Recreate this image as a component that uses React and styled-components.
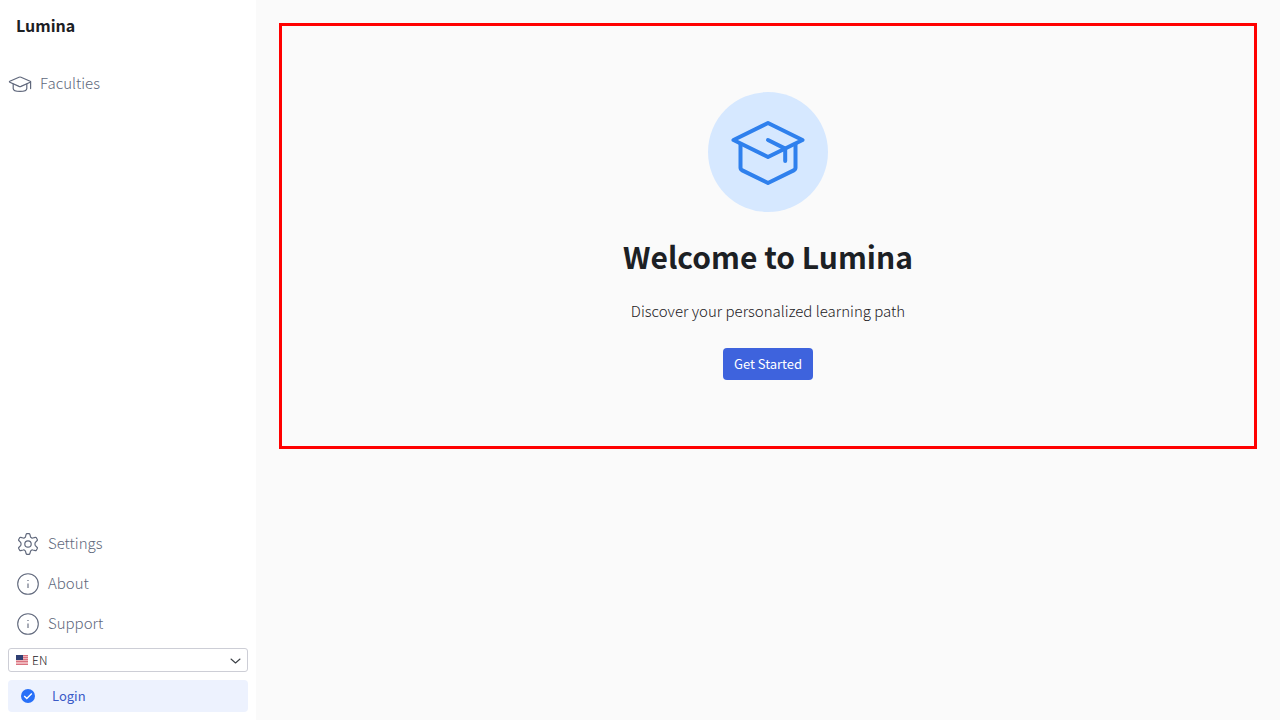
import React from 'react';
import styled, { createGlobalStyle } from 'styled-components';

const GlobalStyle = createGlobalStyle`
  *, *::before, *::after { box-sizing: border-box; }
  body {
    margin: 0;
    background: #fafafa;
    color: #1c2024;
    font-family: "Noto Sans CJK SC", "Noto Sans CJK JP", sans-serif;
    font-size: 15px;
    line-height: 22px;
  }
`;

const Layout = styled.div`
  display: flex;
  min-height: 100vh;
`;

const Sidebar = styled.aside`
  display: flex;
  flex-direction: column;
  flex: 0 0 256px;
  padding: 8px;
  background: #fff;
`;

const Brand = styled.div`
  padding: 4px 8px;
  font-size: 16px;
  line-height: 26px;
  font-weight: 700;
`;

const Nav = styled.nav`
  display: flex;
  flex-direction: column;
  flex: 1;
  justify-content: space-between;
  padding: 30px 0 4px;
`;

const NavGroup = styled.div`
  display: flex;
  flex-direction: column;
  gap: 16px;
  padding: ${(p) => (p.$inset ? '0 8px' : '0')};
`;

const NavLink = styled.a`
  display: flex;
  align-items: flex-start;
  gap: 8px;
  height: 24px;
  color: #60687c;
  font-weight: 300;
  text-decoration: none;
`;

const SidebarFooter = styled.div`
  display: flex;
  flex-direction: column;
  gap: 8px;
  padding-top: 8px;
`;

const LanguageField = styled.div`
  position: relative;
  display: flex;
`;

const LanguageSelect = styled.select`
  appearance: none;
  width: 100%;
  height: 24px;
  padding: 0 24px 0 23px;
  border: 1px solid #cdced6;
  border-radius: 3px;
  background: #fff;
  color: inherit;
  font: inherit;
  font-size: 12px;
  font-weight: 300;
  line-height: 16px;
`;

const FlagIcon = styled.svg`
  position: absolute;
  left: 8px;
  top: 7px;
  pointer-events: none;
`;

const ChevronIcon = styled.svg`
  position: absolute;
  right: 7px;
  top: 8px;
  color: #3c4046;
  pointer-events: none;
`;

const Button = styled.button`
  display: flex;
  align-items: center;
  height: 32px;
  padding: 0 11px;
  border: 0;
  border-radius: 4px;
  background: #3e63dd;
  color: #fff;
  font: inherit;
  font-size: 13px;
  line-height: 20px;
  cursor: pointer;
`;

const LoginButton = styled(Button)`
  gap: 16px;
  padding: 0 12px;
  background: #edf2fe;
  color: #3a5bc7;
`;

const Main = styled.main`
  flex: 1;
  min-width: 0;
  padding: 24px;
`;

const Hero = styled.section`
  display: flex;
  flex-direction: column;
  align-items: center;
  padding: 68px 24px;
  outline: 3px solid #f00;
  outline-offset: -2px;
  text-align: center;
`;

const Badge = styled.div`
  display: grid;
  place-items: center;
  width: 120px;
  height: 120px;
  border-radius: 50%;
  background: #d6e8ff;
  color: #2f80ed;
`;

const Title = styled.h1`
  margin: 24px 0;
  font-size: 30px;
  line-height: 40px;
  font-weight: 700;
`;

const Lead = styled.p`
  margin: 0 0 26px;
  font-weight: 300;
`;

const strokeProps = {
  fill: 'none',
  stroke: 'currentColor',
  strokeLinecap: 'round',
  strokeLinejoin: 'round',
  'aria-hidden': true,
};

const CapIcon = () => (
  <svg width="24" height="24" viewBox="0 0 24 24" strokeWidth="1.2" {...strokeProps}>
    <path d="M1.8 9.2 11 5.2q1-.4 2 0l9.2 4q.8.5 0 1L13 14.4q-1 .4-2 0L1.8 10.2q-.8-.5 0-1Z" />
    <path d="M5.2 12v4.400c0 1.800 3.200 2.900 6.800 2.900s6.800-1.100 6.800-2.900V12M22.600 9.800v6.800" />
  </svg>
);

const GearIcon = () => (
  <svg width="24" height="24" viewBox="0 0 24 24" strokeWidth="1.2" {...strokeProps}>
    <circle cx="12" cy="12" r="3.2" />
    <path d="M10.2 2.2Q10.4 1.6 11 1.6h2q.6 0 .8.6l.7 2.5q.2.6.7.9l.5.3q.5.3 1.1.1l2.5-.7q.6-.1 1 .4l1 1.8q.3.6-.1 1l-1.8 1.8q-.4.5-.4 1.1v1.2q0 .6.4 1.1l1.8 1.8q.4.4.1 1l-1 1.8q-.4.5-1 .4l-2.5-.7q-.6-.2-1.1.1l-.5.3q-.5.3-.7.9l-.7 2.5q-.2.6-.8.6h-2q-.6 0-.8-.6l-.7-2.5q-.2-.6-.7-.9l-.5-.3q-.5-.3-1.1-.1l-2.5.7q-.6.1-1-.4l-1-1.8q-.3-.6.1-1l1.8-1.8q.4-.5.4-1.1v-1.2q0-.6-.4-1.1L2.8 8.5q-.4-.4-.1-1l1-1.8q.4-.5 1-.4L7.2 6q.6.2 1.1-.1l.5-.3q.5-.3.7-.9Z" />
  </svg>
);

const InfoIcon = () => (
  <svg width="24" height="24" viewBox="0 0 24 24" strokeWidth="1.1" {...strokeProps}>
    <circle cx="12" cy="12" r="10.3" />
    <path d="M12 11.5v4.5" strokeLinecap="butt" />
    <path d="M11.4 8.5h1.2" strokeWidth="1" strokeLinecap="butt" />
  </svg>
);

const CheckBadgeIcon = () => (
  <svg width="16" height="16" viewBox="0 0 16 16" aria-hidden="true">
    <circle cx="8" cy="8" r="7" fill="#2870f8" />
    <path d="m4.2 8 2.6 2.6 5-5" fill="none" stroke="#fff" strokeWidth="1.4" />
  </svg>
);

const GraduationIcon = () => (
  <svg width="80" height="80" viewBox="0 0 80 80" strokeWidth="4" {...strokeProps}>
    <path d="M5.500 28 40 11 74.500 28 40 45Z" />
    <path d="M12.500 32v23.500q0 2 1.800 2.900L40 71l25.700-12.600q1.800-.9 1.800-2.900V32" />
    <path d="m40 28 17.200 8.600V49" />
  </svg>
);

export default function App() {
  return (
    <>
      <GlobalStyle />
      <Layout>
        <Sidebar>
          <Brand>Lumina</Brand>
          <Nav>
            <NavGroup>
              <NavLink href="#faculties"><CapIcon />Faculties</NavLink>
            </NavGroup>
            <NavGroup $inset>
              <NavLink href="#settings"><GearIcon />Settings</NavLink>
              <NavLink href="#about"><InfoIcon />About</NavLink>
              <NavLink href="#support"><InfoIcon />Support</NavLink>
            </NavGroup>
          </Nav>
          <SidebarFooter>
            <LanguageField>
              <LanguageSelect aria-label="Language" defaultValue="en">
                <option value="en">EN</option>
              </LanguageSelect>
              <FlagIcon width="12" height="10" viewBox="0 0 12 10" aria-hidden="true">
                <path fill="#eeb4ba" d="M0 0h12v10H0z" />
                <path fill="#d9727e" d="M0 0h12v1H0zM0 2h12v1H0zM0 4h12v1H0zM0 6h12v1H0zM0 9h12v1H0z" />
                <path fill="#2f3f72" d="M0 0h7v5H0z" />
              </FlagIcon>
              <ChevronIcon width="12" height="10" viewBox="0 0 12 10" strokeWidth="1.1" {...strokeProps}>
                <path d="m2 3 4.500 4L11 3" />
              </ChevronIcon>
            </LanguageField>
            <LoginButton type="button"><CheckBadgeIcon />Login</LoginButton>
          </SidebarFooter>
        </Sidebar>
        <Main>
          <Hero>
            <Badge><GraduationIcon /></Badge>
            <Title>Welcome to Lumina</Title>
            <Lead>Discover your personalized learning path</Lead>
            <Button type="button">Get Started</Button>
          </Hero>
        </Main>
      </Layout>
    </>
  );
}
